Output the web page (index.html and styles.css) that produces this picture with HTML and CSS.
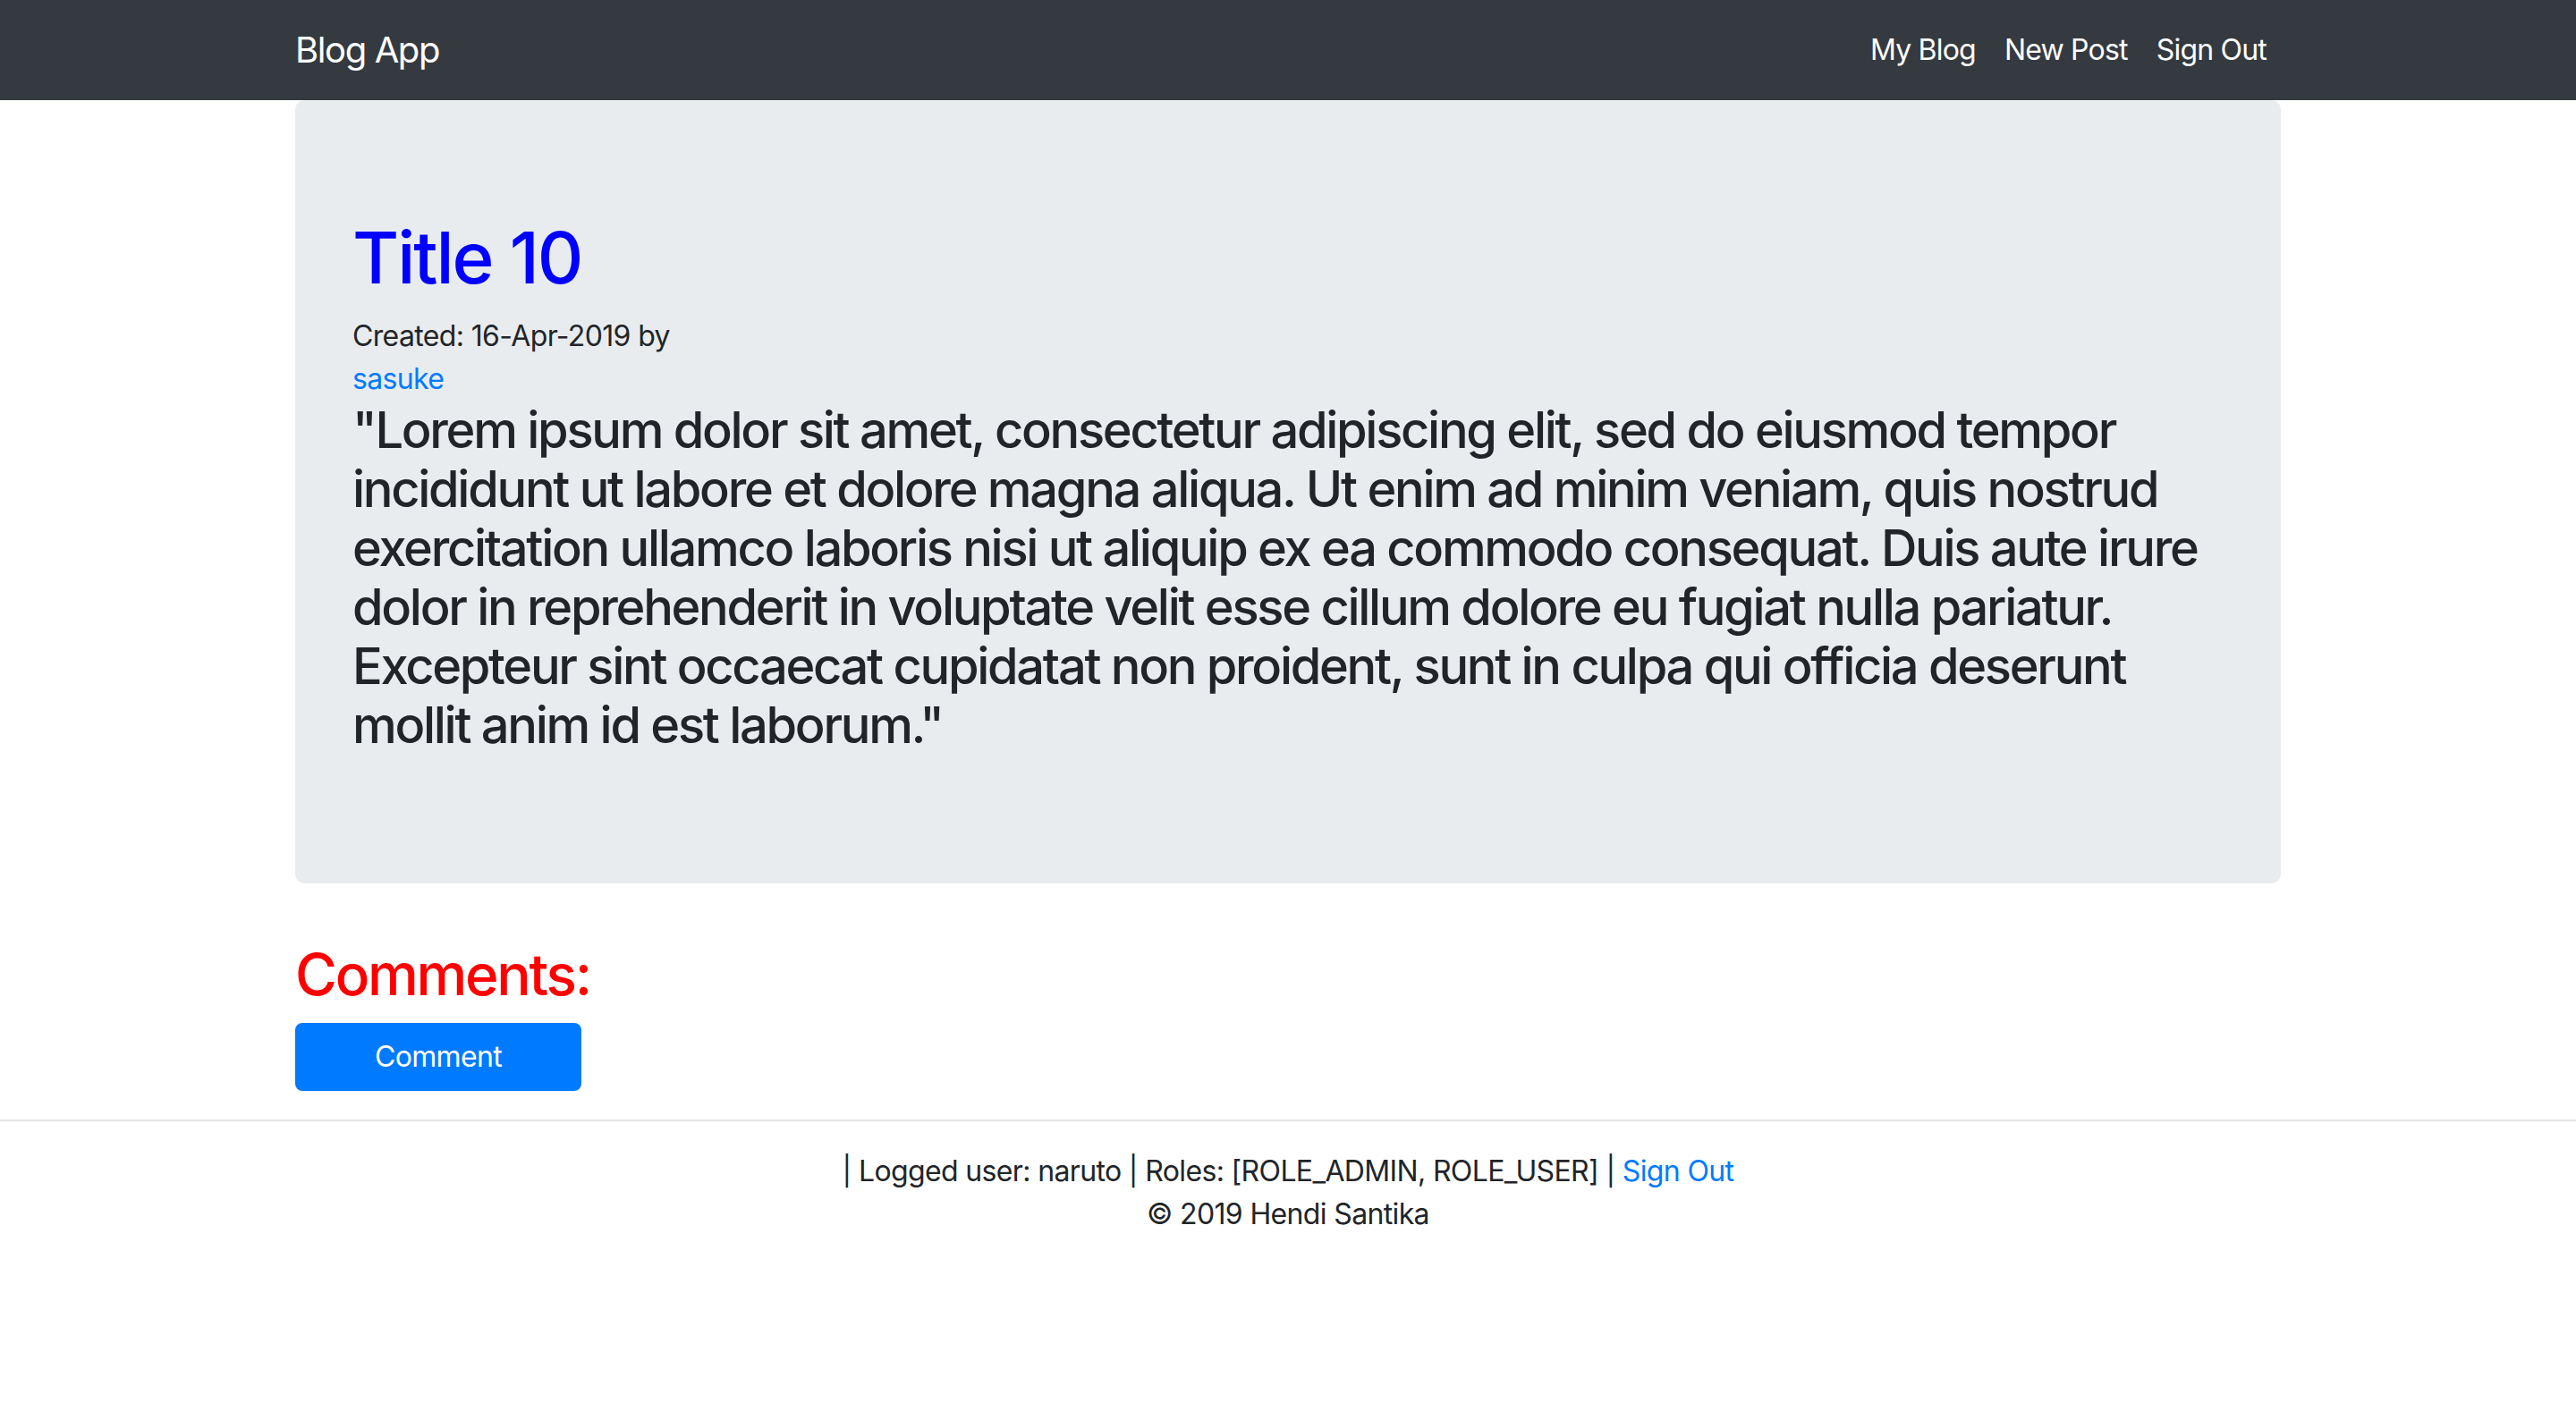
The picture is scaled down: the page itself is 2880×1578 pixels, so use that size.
FILE: index.html
```html
<!DOCTYPE html>
<html lang="en">
<head>
<meta charset="utf-8">
<title>Blog App</title>
<link rel="stylesheet" href="styles.css">
</head>
<body>
<nav class="navbar">
  <div class="nav-inner">
    <a class="brand" href="#">Blog App</a>
    <ul class="nav-links">
      <li><a href="#">My Blog</a></li>
      <li><a href="#">New Post</a></li>
      <li><a href="#">Sign Out</a></li>
    </ul>
  </div>
</nav>
<main class="container">
  <section class="jumbotron">
    <h1 class="post-title">Title 10</h1>
    <div class="meta">Created: 16-Apr-2019 by</div>
    <div class="meta"><a href="#">sasuke</a></div>
    <h3 class="post-body">"Lorem ipsum dolor sit amet, consectetur adipiscing elit, sed do eiusmod tempor incididunt ut labore et dolore magna aliqua. Ut enim ad minim veniam, quis nostrud exercitation ullamco laboris nisi ut aliquip ex ea commodo consequat. Duis aute irure dolor in reprehenderit in voluptate velit esse cillum dolore eu fugiat nulla pariatur. Excepteur sint occaecat cupidatat non proident, sunt in culpa qui officia deserunt mollit anim id est laborum."</h3>
  </section>
  <h2 class="comments-title">Comments:</h2>
  <button class="btn-primary" type="button">Comment</button>
</main>
<hr class="divider">
<footer class="footer">
  <div>| Logged user: naruto | Roles: [ROLE_ADMIN, ROLE_USER] | <a href="#">Sign Out</a></div>
  <div>© 2019 Hendi Santika</div>
</footer>
</body>
</html>
```
FILE: styles.css
```css
* { box-sizing: border-box; }
html, body { margin: 0; padding: 0; }
body {
  font-family: Inter, "Noto Sans", "Liberation Sans", sans-serif;
  font-size: 32px;
  line-height: 48px;
  letter-spacing: -0.02em;
  color: #212529;
  background: #fff;
}
a { color: #007bff; text-decoration: none; }

.navbar {
  background: #343a40;
  height: 112px;
  display: flex;
  align-items: center;
}
.nav-inner {
  width: 2280px;
  margin: 0 auto;
  padding: 0 30px;
  display: flex;
  align-items: center;
  justify-content: space-between;
}
.brand {
  color: #fff;
  font-size: 40px;
  line-height: 60px;
  letter-spacing: -0.035em;
}
.nav-links {
  list-style: none;
  margin: 0;
  padding: 0;
  display: flex;
}
.nav-links a {
  color: #fff;
  display: block;
  padding: 16px 16px;
  letter-spacing: -0.025em;
}

.container {
  width: 2280px;
  margin: 0 auto;
  padding: 0 30px;
}
.jumbotron {
  background: #e9ecef;
  border-radius: 10px;
  padding: 128px 64px;
  margin-bottom: 64px;
}
h1, h2, h3 { font-weight: 500; margin: 0 0 16px; }
.post-title { font-size: 80px; line-height: 96px; color: #0000ff; letter-spacing: -0.026em; }
.post-body { font-size: 56px; line-height: 66px; letter-spacing: -0.041em; }
.comments-title { font-size: 64px; line-height: 76px; color: #ff0000; letter-spacing: -0.036em; }
.btn-primary {
  display: block;
  width: 320px;
  height: 76px;
  background: #007bff;
  color: #fff;
  border: 2px solid #007bff;
  border-radius: 8px;
  font-family: inherit;
  font-size: 32px;
  line-height: 48px;
  letter-spacing: -0.02em;
  padding: 12px 24px;
}
.divider {
  border: 0;
  border-top: 2px solid rgba(0,0,0,.1);
  margin: 32px 0;
}
.footer {
  text-align: center;
}
```
